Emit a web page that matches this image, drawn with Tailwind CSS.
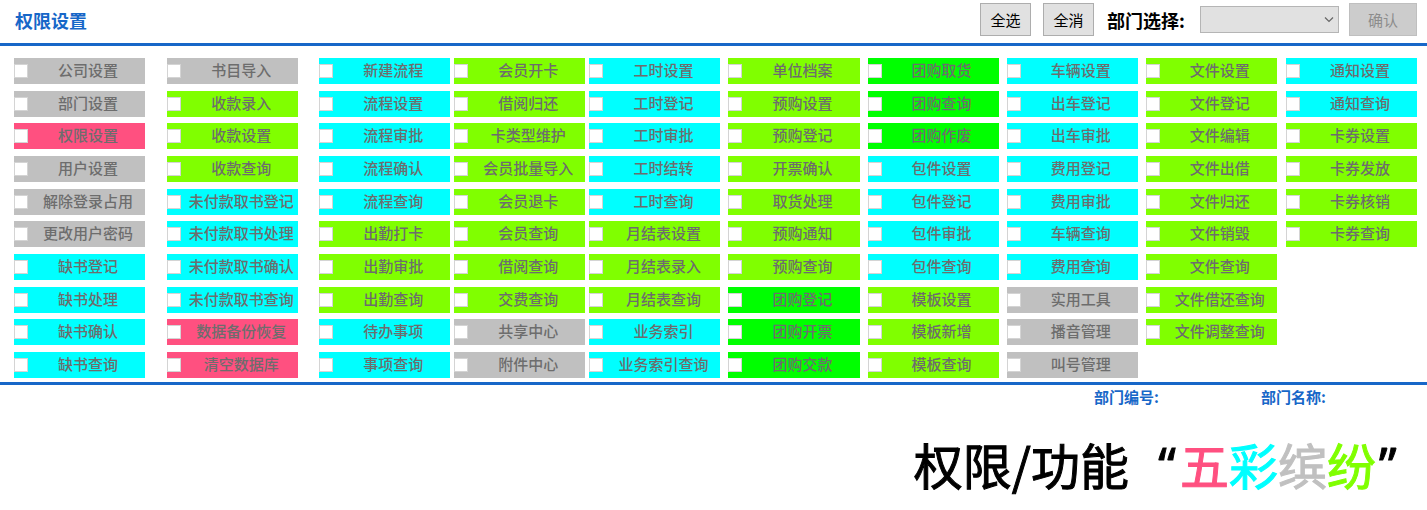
<!DOCTYPE html>
<html lang="zh-CN">
<head>
<meta charset="utf-8">
<title>权限设置</title>
<script src="https://cdn.jsdelivr.net/npm/@tailwindcss/browser@4"></script>
</head>
<body class="bg-white font-['Noto_Sans_CJK_SC',sans-serif] text-black">
<header class="flex h-[46px] items-start justify-between border-b-3 border-[#1767c8] pr-[10px] pl-[15px]">
  <h1 class="pt-2 text-[18px] leading-6 font-bold text-[#1767c8]">权限设置</h1>
  <div class="flex items-center pt-[3px]">
    <button type="button" class="h-[33px] w-[51px] border border-[#adadad] bg-[#e1e1e1] text-[15px] leading-5">全选</button>
    <button type="button" class="ml-3 h-[33px] w-[51px] border border-[#adadad] bg-[#e1e1e1] text-[15px] leading-5">全消</button>
    <label for="dept" class="ml-[13px] w-[93px] text-[18px] leading-6 font-bold whitespace-nowrap">部门选择:</label>
    <span class="relative flex">
      <select id="dept" class="h-[27px] w-[139px] appearance-none border border-[#b5b5b5] bg-[#e1e1e1]"><option></option></select>
      <svg class="pointer-events-none absolute top-[10px] right-1 h-2 w-3" viewBox="0 0 12 8" fill="none" stroke="#666" stroke-width="1.2"><path d="M2 1.5 6 5.5 10 1.5"/></svg>
    </span>
    <button type="button" disabled class="ml-[10px] h-[33px] w-[68px] border border-[#bfbfbf] bg-[#cccccc] text-[15px] leading-5 text-[#8c8c8c]">确认</button>
  </div>
</header>
<main id="grid" class="flex border-b-3 border-[#1767c8] pt-3 pr-[10px] pb-1 pl-[14px]"></main>
<div class="flex justify-end pt-[2px] pr-[10px] text-[15px] leading-5 font-bold text-[#1767c8]">
  <span class="w-[167px]">部门编号:</span>
  <span class="w-[156px]">部门名称:</span>
</div>
<p class="flex justify-end pt-[22px] text-[49px] leading-[70px] whitespace-nowrap [-webkit-text-stroke:1px_currentColor]">
  <span>权限/功能</span><span class="w-[51px] pr-1 text-right font-['Noto_Sans']">“</span><span class="text-[#ff5080]">五</span><span class="text-[#00ffff]">彩</span><span class="text-[#c0c0c0]">缤</span><span class="text-[#80ff00]">纷</span><span class="w-[51px] pl-[3px] font-['Noto_Sans']">”</span>
</p>
<script>
const tone = {
  s: 'bg-[#c0c0c0]',
  p: 'bg-[#ff5080]',
  c: 'bg-[#00ffff]',
  l: 'bg-[#80ff00]',
  g: 'bg-[#00ff00]'
};
// Each column: left margin, one colour key per row, row labels.
const columns = [
  ['ml-0', 'sspssscccc', '公司设置 部门设置 权限设置 用户设置 解除登录占用 更改用户密码 缺书登记 缺书处理 缺书确认 缺书查询'],
  ['ml-[22px]', 'slllccccpp', '书目导入 收款录入 收款设置 收款查询 未付款取书登记 未付款取书处理 未付款取书确认 未付款取书查询 数据备份恢复 清空数据库'],
  ['ml-[21px]', 'ccccclllcc', '新建流程 流程设置 流程审批 流程确认 流程查询 出勤打卡 出勤审批 出勤查询 待办事项 事项查询'],
  ['ml-1', 'llllllllss', '会员开卡 借阅归还 卡类型维护 会员批量导入 会员退卡 会员查询 借阅查询 交费查询 共享中心 附件中心'],
  ['ml-1', 'ccccclllcc', '工时设置 工时登记 工时审批 工时结转 工时查询 月结表设置 月结表录入 月结表查询 业务索引 业务索引查询'],
  ['ml-2', 'lllllllggg', '单位档案 预购设置 预购登记 开票确认 取货处理 预购通知 预购查询 团购登记 团购开票 团购交款'],
  ['ml-2', 'gggcccclll', '团购取货 团购查询 团购作废 包件设置 包件登记 包件审批 包件查询 模板设置 模板新增 模板查询'],
  ['ml-2', 'cccccccsss', '车辆设置 出车登记 出车审批 费用登记 费用审批 车辆查询 费用查询 实用工具 播音管理 叫号管理'],
  ['ml-2', 'lllllllll', '文件设置 文件登记 文件编辑 文件出借 文件归还 文件销毁 文件查询 文件借还查询 文件调整查询'],
  ['ml-[9px]', 'ccllll', '通知设置 通知查询 卡券设置 卡券发放 卡券核销 卡券查询']
];
document.getElementById('grid').innerHTML = columns.map(([margin, keys, names], c) =>
  `<div class="grid h-[320px] min-w-0 flex-1 grid-rows-[repeat(10,26px)] content-between ${margin}">` +
  names.split(' ').map((name, r) =>
    `<label for="p${c}-${r}" class="flex items-center ${tone[keys[r]]}">
      <input id="p${c}-${r}" type="checkbox" class="size-[14px] shrink-0 appearance-none border border-[#d4d4d4] bg-white checked:bg-[#1767c8]">
      <span class="min-w-0 flex-1 pb-[2px] pl-[3px] text-center text-[15px] leading-5 font-medium whitespace-nowrap text-[#6d6d6d]">${name}</span>
    </label>`).join('') + '</div>').join('');
</script>
</body>
</html>
